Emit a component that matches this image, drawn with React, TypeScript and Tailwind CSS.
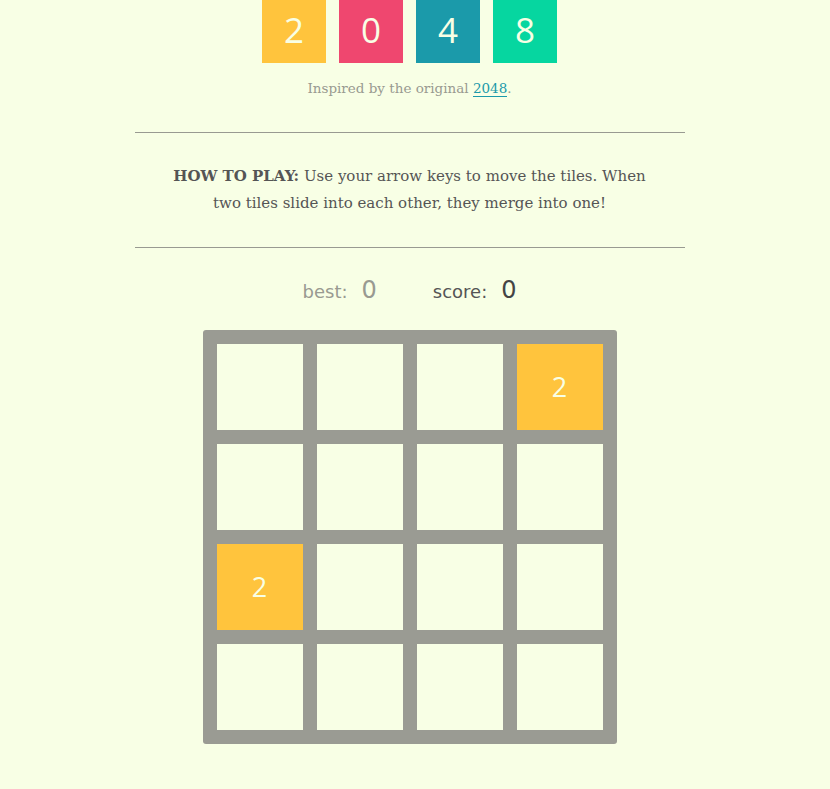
const titleTiles = [
  { ch: "2", bg: "bg-[#ffc43d]" },
  { ch: "0", bg: "bg-[#ef476f]" },
  { ch: "4", bg: "bg-[#1b9aaa]" },
  { ch: "8", bg: "bg-[#06d6a0]" },
];

const board = [
  [0, 0, 0, 2],
  [0, 0, 0, 0],
  [2, 0, 0, 0],
  [0, 0, 0, 0],
];

export default function App() {
  return (
    <div className="min-h-[789px] bg-[#f8ffe5] pr-[11px] font-['DejaVu_Serif',serif] text-[#555]">
      <header className="flex flex-col items-center">
        <div className="flex gap-[13px]">
          {titleTiles.map((t) => (
            <div
              key={t.ch}
              className={`${t.bg} flex h-[63px] w-[64px] items-center justify-center pb-[2px] font-['Open_Sans',sans-serif] text-[35px] text-[#f8ffe5]`}
            >
              {t.ch}
            </div>
          ))}
        </div>
        <p className="mt-[15px] text-[13.5px] text-[#999a91]">
          Inspired by the original{" "}
          <a href="#" className="border-b border-[#1b9aaa] text-[#1b9aaa]">
            2048
          </a>
          .
        </p>
      </header>

      <section className="mx-auto mt-[34px] w-[550px] border-y border-[#999a91] py-[30px]">
        <p className="px-[30px] text-center text-[15px] leading-[27px]">
          <strong className="font-bold">HOW TO PLAY:</strong> Use your arrow keys to move the tiles. When two tiles
          slide into each other, they merge into one!
        </p>
      </section>

      <div className="mt-[24px] flex justify-center gap-[56px] font-['DejaVu_Sans',sans-serif]">
        <div className="flex items-baseline gap-[14px]">
          <span className="text-[18px] text-[#999a91]">best:</span>
          <span className="text-[24px] text-[#999a91]">0</span>
        </div>
        <div className="flex items-baseline gap-[14px]">
          <span className="text-[18px] text-[#555]">score:</span>
          <span className="text-[24px] text-[#444]">0</span>
        </div>
      </div>

      <div className="mx-auto mt-[22px] grid w-[414px] grid-cols-4 gap-[14px] rounded-[3px] bg-[#9a9b93] p-[14px]">
        {board.flat().map((v, i) => (
          <div
            key={i}
            className={`flex h-[86px] items-center justify-center font-['Open_Sans',sans-serif] text-[27px] text-[#f8ffe5] ${
              v ? "bg-[#ffc43d]" : "bg-[#f8ffe5]"
            }`}
          >
            {v ? v : ""}
          </div>
        ))}
      </div>
    </div>
  );
}
